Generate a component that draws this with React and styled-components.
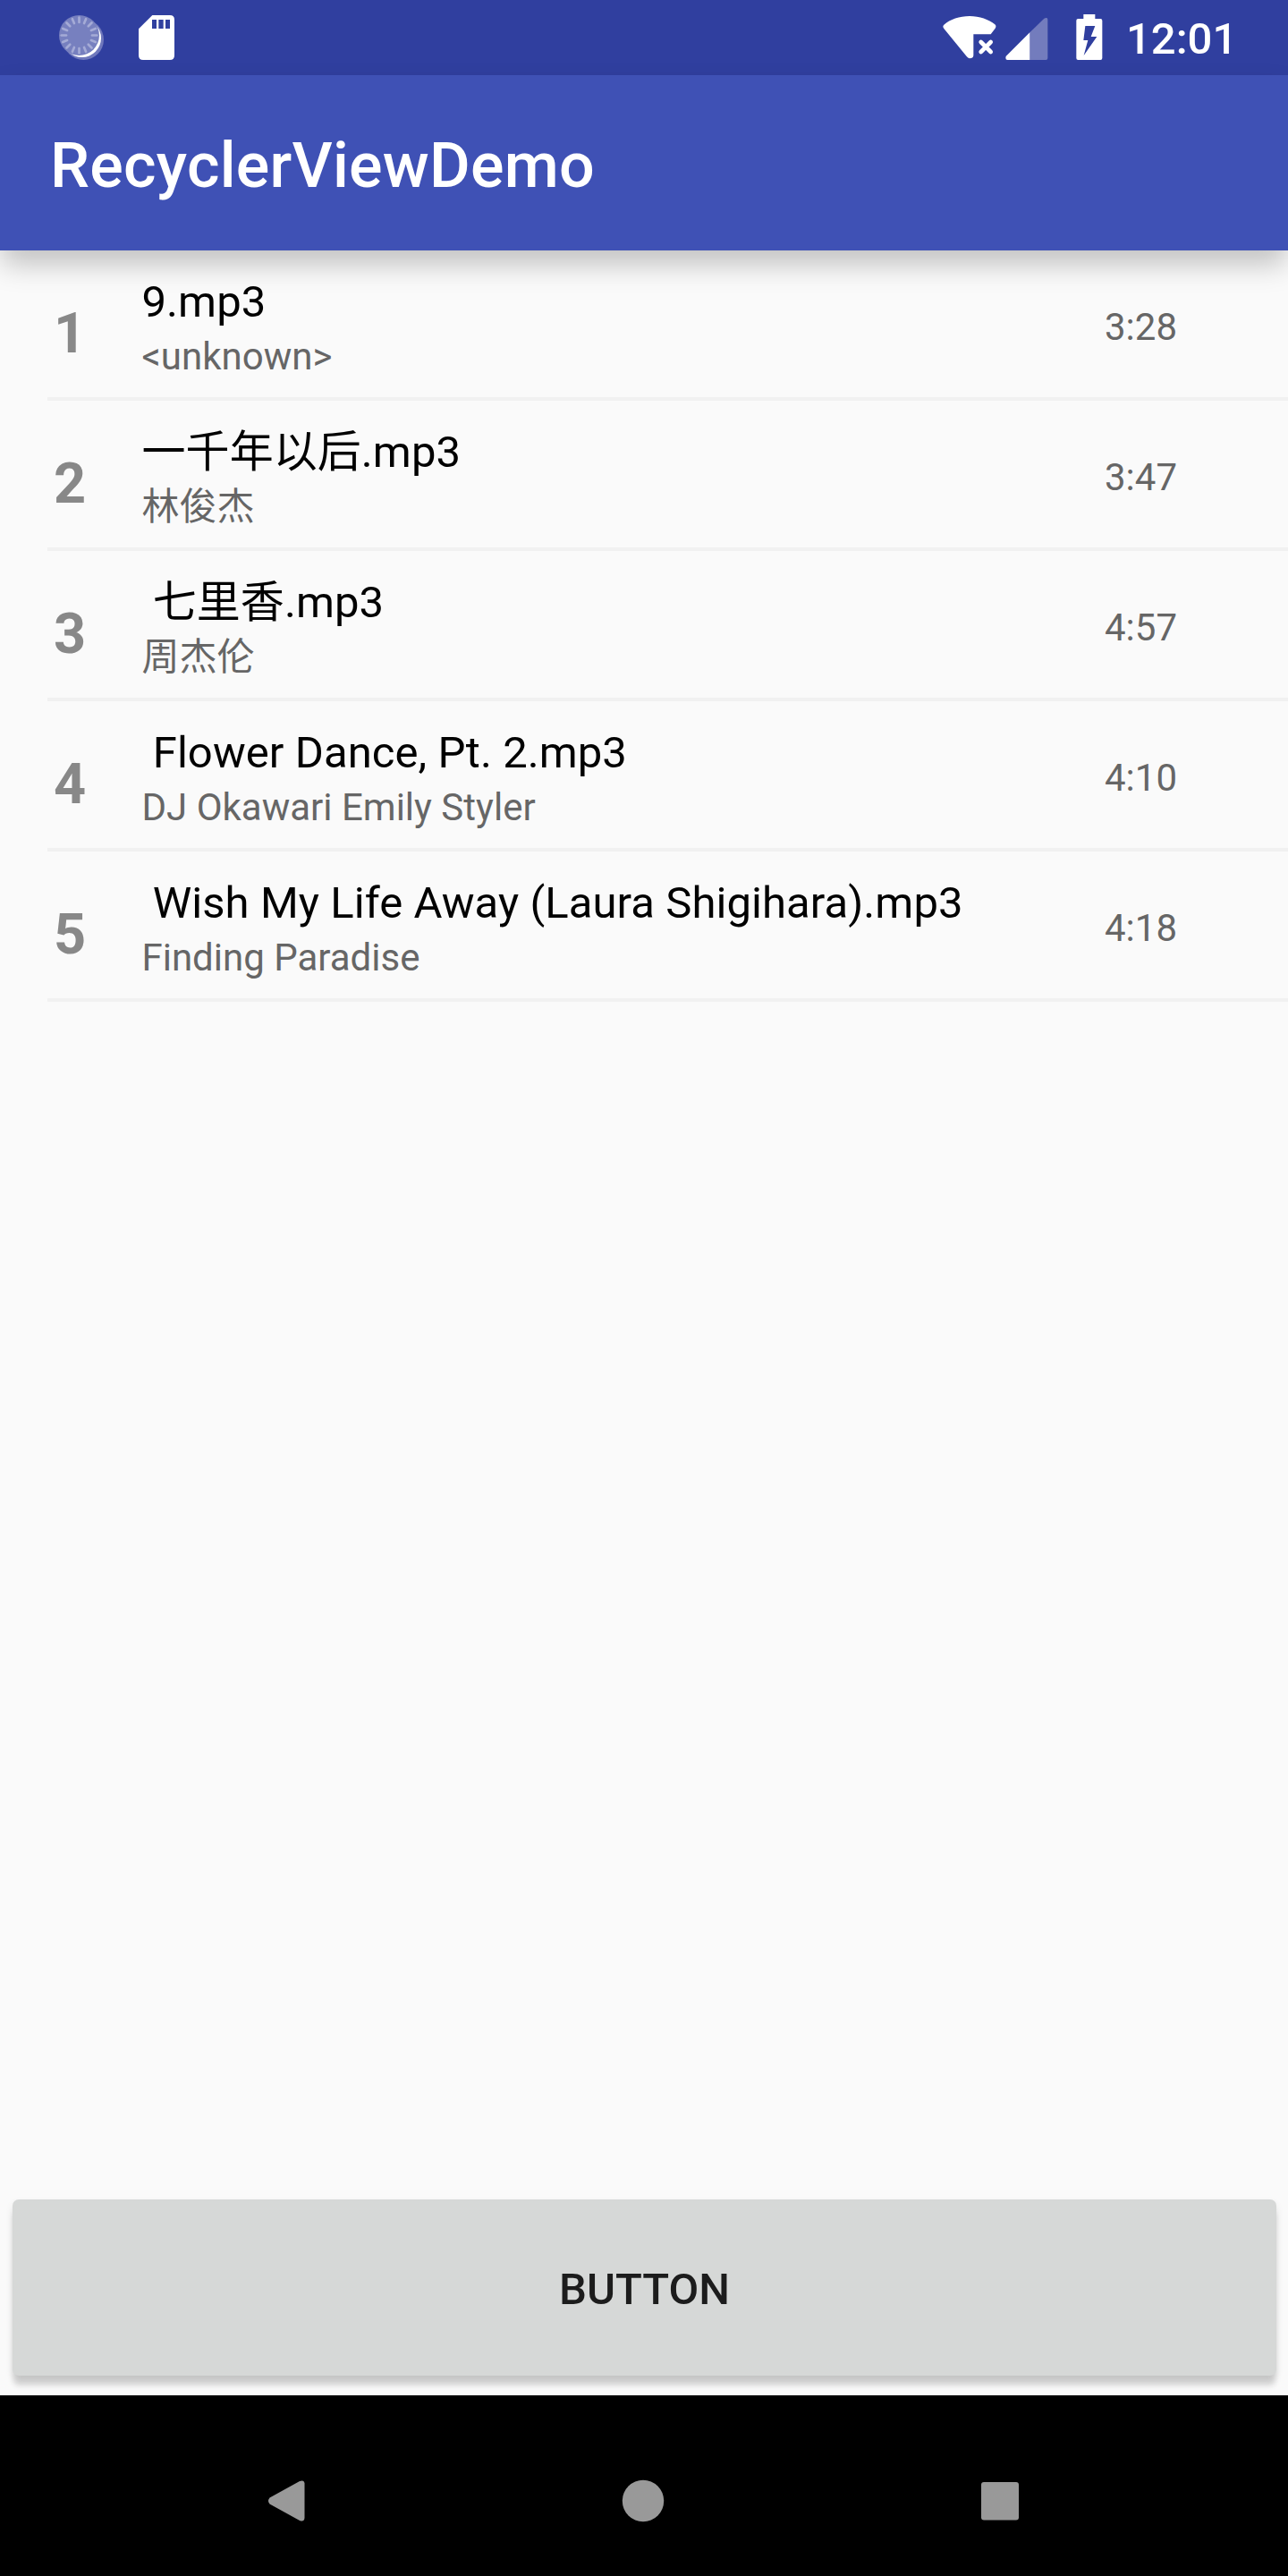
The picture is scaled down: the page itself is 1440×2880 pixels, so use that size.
import React from "react";
import styled, { createGlobalStyle } from "styled-components";

const GlobalStyle = createGlobalStyle`
  * { box-sizing: border-box; }
  body { margin: 0; background: #fafafa; }
`;

const Screen = styled.div`
  width: 1440px;
  height: 2880px;
  display: flex;
  flex-direction: column;
  background: #fafafa;
  font-family: Roboto, "Noto Sans CJK SC", sans-serif;
  overflow: hidden;
`;

const StatusBar = styled.header`
  display: flex;
  justify-content: space-between;
  flex: none;
  height: 84px;
  padding: 0 63px 0 66px;
  background: #303f9f;
`;

const StatusGroup = styled.div`
  display: flex;
`;

const StatusIcon = styled.svg`
  display: block;
  width: ${(p) => p.$w}px;
  height: 84px;
  margin-right: ${(p) => p.$gap || 0}px;
`;

const Clock = styled.time`
  width: 118px;
  font-size: 49px;
  font-weight: 500;
  line-height: 88px;
  color: #fff;
  white-space: nowrap;
`;

const AppBar = styled.div`
  position: relative;
  z-index: 1;
  display: flex;
  flex: none;
  height: 196px;
  padding: 0 56px;
  background: #3f51b5;
  box-shadow: 0 17px 30px -2px rgba(0, 0, 0, 0.23);
`;

const AppTitle = styled.h1`
  margin: 0;
  color: #fff;
  font-size: 70px;
  font-weight: 500;
  line-height: 202px;
  letter-spacing: 0.25px;
`;

const TrackList = styled.ul`
  flex: 1;
  margin: 0;
  padding: 0 0 0 53px;
  list-style: none;
`;

const TrackRow = styled.li`
  display: grid;
  grid-template-columns: 98.5px 1076.5px 1fr;
  height: 168px;
  padding-left: 7px;
  border-bottom: 4px solid #f1f1f1;
`;

const TrackNumber = styled.span`
  padding-top: 53px;
  color: #888;
  font-size: 63px;
  font-weight: 700;
  line-height: 80px;
`;

const TrackInfo = styled.div`
  display: flex;
  flex-direction: column;
  padding-top: 28px;
  white-space: pre;
`;

const TrackTitle = styled.span`
  color: #000;
  font-size: 49px;
  line-height: 60px;
  letter-spacing: 0.07px;
`;

const TrackArtist = styled.span`
  color: #666;
  font-size: 42px;
  line-height: 62px;
`;

const TrackDuration = styled.span`
  padding-top: 61px;
  color: #666;
  font-size: 42px;
  line-height: 50px;
`;

const ButtonArea = styled.div`
  flex: none;
  height: 219px;
  padding: 0 13px 22px 14px;
`;

const ActionButton = styled.button`
  display: block;
  width: 100%;
  height: 197px;
  padding: 3px 0 0;
  border: 0;
  border-radius: 7px;
  background: #d6d8d7;
  box-shadow: 0 12px 6px -1px rgba(0, 0, 0, 0.15), 0 4px 9px rgba(0, 0, 0, 0.09);
  color: #1c1c1c;
  font-family: inherit;
  font-size: 49px;
  font-weight: 500;
  line-height: 1;
`;

const NavBar = styled.nav`
  display: flex;
  flex: none;
  height: 202px;
  justify-content: space-between;
  align-items: center;
  padding: 34px 298px 0 296px;
  background: #000;
`;

const NavIcon = styled.svg`
  display: block;
  width: 48px;
  height: 48px;
  fill: #999;
`;

const TRACKS = [
  { title: "9.mp3", artist: "<unknown>", duration: "3:28" },
  { title: "一千年以后.mp3", artist: "林俊杰", duration: "3:47" },
  { title: " 七里香.mp3", artist: "周杰伦", duration: "4:57" },
  { title: " Flower Dance, Pt. 2.mp3", artist: "DJ Okawari Emily Styler", duration: "4:10" },
  { title: " Wish My Life Away (Laura Shigihara).mp3", artist: "Finding Paradise", duration: "4:18" },
];

const RAYS = Array.from({ length: 16 }, (_, i) => i * 22.5);

function SyncIcon() {
  return (
    <StatusIcon $w={50} $gap={39} viewBox="78 0 150 252">
      <circle cx="160" cy="133" r="68" fill="#6f78bc" />
      <circle cx="155" cy="128" r="64" fill="#fff" />
      <circle cx="145.5" cy="118.5" r="67.5" fill="#7780bf" />
      {RAYS.map((a) => (
        <path
          key={a}
          d="M145.5 59v16"
          stroke="#a5abd6"
          strokeWidth="8"
          strokeLinecap="round"
          transform={`rotate(${a} 145.5 118.5)`}
        />
      ))}
    </StatusIcon>
  );
}

function SdCardIcon() {
  return (
    <StatusIcon $w={40} viewBox="345 0 120 252">
      <path
        fill="#fff"
        fillRule="evenodd"
        d="M391 51H450Q465 51 465 66V186Q465 201 450 201H360Q345 201 345 186V97ZM390 66V96H405V66ZM412 66V96H428V66ZM435 66V96H450V66Z"
      />
    </StatusIcon>
  );
}

function WifiOffIcon() {
  return (
    <StatusIcon $w={60} $gap={9.33} viewBox="73 0 180 252">
      <path
        fill="#fff"
        d="M77 83C98 65 129 54 163 54C197 54 227 65 248 82Q254 88 249 95L234 115H176V186Q175 196 163 196Q157 195 153 189L77 96Q71 89 77 83Z"
      />
      <path d="M201 141L234 174M234 141L201 174" stroke="#fff" strokeWidth="14" strokeLinecap="round" />
    </StatusIcon>
  );
}

function SignalIcon() {
  return (
    <StatusIcon $w={48} $gap={31} viewBox="281 0 144 252">
      <path
        fill="#737cbd"
        d="M363 109L411 62Q416 59 420 60Q423 62 423 66V195Q423 201 417 201H363Z"
      />
      <path fill="#fff" d="M363 109V201H288Q282 201 282 194Q282 190 285 187Z" />
    </StatusIcon>
  );
}

function BatteryIcon() {
  return (
    <StatusIcon $w={30} $gap={26.33} viewBox="518 0 90 252">
      <path
        fill="#fff"
        fillRule="evenodd"
        d="M543 48H582V63H600Q606 63 606 69V195Q606 201 600 201H525Q519 201 519 195V69Q519 63 525 63H543ZM549 87L543 135H558L544 186L588 123H568L582 87Z"
      />
    </StatusIcon>
  );
}

export default function App() {
  return (
    <Screen>
      <GlobalStyle />
      <StatusBar>
        <StatusGroup>
          <SyncIcon />
          <SdCardIcon />
        </StatusGroup>
        <StatusGroup>
          <WifiOffIcon />
          <SignalIcon />
          <BatteryIcon />
          <Clock>12:01</Clock>
        </StatusGroup>
      </StatusBar>
      <AppBar>
        <AppTitle>RecyclerViewDemo</AppTitle>
      </AppBar>
      <TrackList>
        {TRACKS.map((t, i) => (
          <TrackRow key={t.title}>
            <TrackNumber>{i + 1}</TrackNumber>
            <TrackInfo>
              <TrackTitle>{t.title}</TrackTitle>
              <TrackArtist>{t.artist}</TrackArtist>
            </TrackInfo>
            <TrackDuration>{t.duration}</TrackDuration>
          </TrackRow>
        ))}
      </TrackList>
      <ButtonArea>
        <ActionButton type="button">BUTTON</ActionButton>
      </ButtonArea>
      <NavBar>
        <NavIcon viewBox="0 0 48 48">
          <path d="M5.5 20.5L39 2Q44 0 44.5 4.5V43Q44 48 39 46L5.5 27.5Q2.5 24 5.5 20.5Z" />
        </NavIcon>
        <NavIcon viewBox="0 0 48 48">
          <circle cx="24" cy="24" r="23.2" />
        </NavIcon>
        <NavIcon viewBox="0 0 48 48">
          <rect x="3" y="3" width="42" height="42.5" rx="3" />
        </NavIcon>
      </NavBar>
    </Screen>
  );
}
